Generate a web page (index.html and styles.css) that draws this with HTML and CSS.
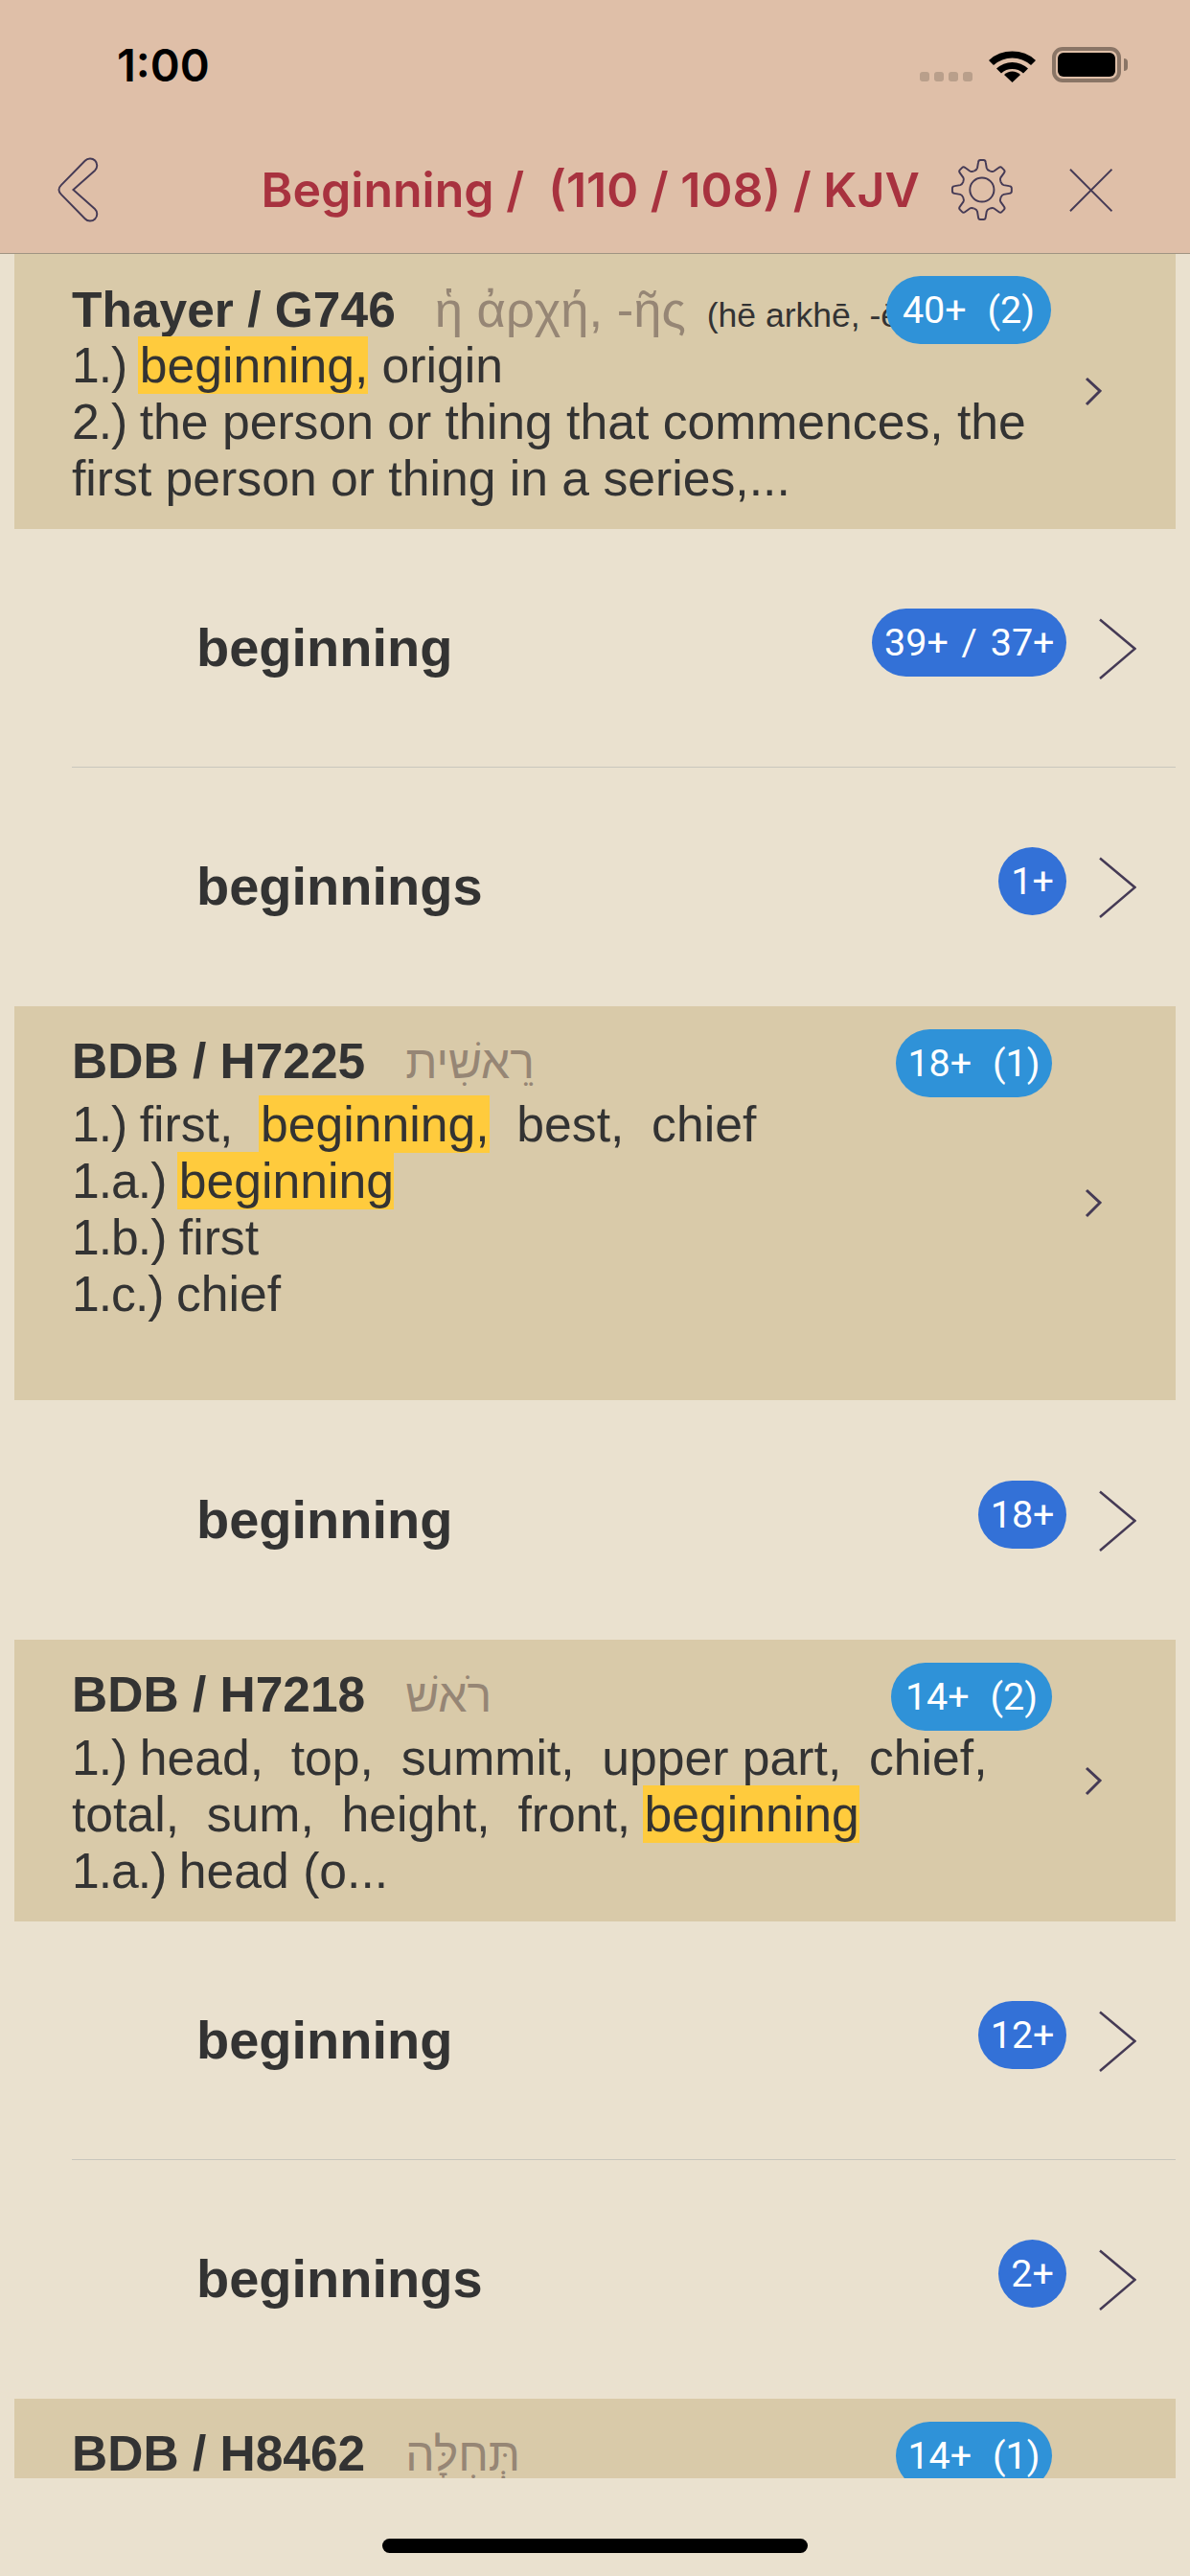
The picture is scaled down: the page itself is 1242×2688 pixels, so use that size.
FILE: index.html
```html
<html>
<head>
<meta charset="utf-8">
<link rel="stylesheet" href="styles.css">
</head>
<body>
<svg class="defs">
  <defs>
    <path id="tooth" d="M-8.4-20.3Q-5.5-21.5-5-23.5L-4-29.5Q-3.7-32-1.8-32L1.8-32Q3.7-32 4-29.5L5-23.5Q5.5-21.5 8.4-20.3"/>
    <path id="chev" d="M2 1.500L38.500 32L2 63"/>
    <path id="chev-sm" d="M2 2L16 15L2 29"/>
  </defs>
</svg>
<div class="wrapper">
  <header class="top">
    <div class="status">
      <span class="time">1:00</span>
      <div class="status__right">
        <div class="signal"><i></i><i></i><i></i><i></i></div>
        <svg class="wifi" width="49" height="36" viewBox="0 0 49 36"><path d="M0 13A36 36 0 0 1 49 13L44 18A29 29 0 0 0 5 18Z"/><path d="M8 21.500A24 24 0 0 1 41 21.500L36 26.500A17 17 0 0 0 13 26.500Z"/><path d="M24.500 36L16 28A12 12 0 0 1 33 28Z"/></svg>
        <div class="battery"><div class="battery__fill"></div></div>
        <div class="battery__nub"></div>
      </div>
    </div>
    <nav class="nav">
      <svg class="nav__back" width="44" height="72" viewBox="0 0 44 72" fill="none" stroke="#453a55" stroke-width="2"><path d="M17 36L40.300 15.300A7.500 7.500 0 1 0 29.700 4.700L4 31Q-1 36 4 41L29.700 67.300A7.500 7.500 0 1 0 40.300 56.700Z"/></svg>
      <span class="nav__title">Beginning /&nbsp; (110 / 108) / KJV</span>
      <svg class="nav__gear" width="68" height="68" viewBox="-34 -34 68 68" fill="none" stroke="#453a55" stroke-width="2">
        <use href="#tooth"/><use href="#tooth" transform="rotate(45)"/><use href="#tooth" transform="rotate(90)"/><use href="#tooth" transform="rotate(135)"/><use href="#tooth" transform="rotate(180)"/><use href="#tooth" transform="rotate(225)"/><use href="#tooth" transform="rotate(270)"/><use href="#tooth" transform="rotate(315)"/>
        <circle r="13"/>
      </svg>
      <svg class="nav__close" width="47" height="47" viewBox="0 0 47 47" fill="none" stroke="#453a55" stroke-width="2"><path d="M1 1L46 46M46 1L1 46"/></svg>
    </nav>
  </header>

  <main class="list">
    <section class="entry entry--s1">
      <div class="entry__body">
        <div class="entry__head"><b>Thayer / G746</b><span class="orig orig--gr">ἡ ἀρχή, -ῆς</span><span class="translit">(hē arkhē, -ēs)</span></div>
        <div><span class="num">1.) </span><mark>beginning,</mark> origin<br><span class="num">2.) </span>the person or thing that commences, the<br>first person or thing in a series,...</div>
      </div>
      <span class="badge badge--head">40+ (2)</span>
      <svg class="entry__chev" width="18" height="31" viewBox="0 0 18 31" fill="none" stroke="#453a55" stroke-width="3"><use href="#chev-sm"/></svg>
    </section>
    <div class="row">
      <span class="row__word">beginning</span>
      <span class="badge">39+ / 37+</span>
      <svg class="row__chev" width="40" height="65" viewBox="0 0 40 65" fill="none" stroke="#453a55" stroke-width="2.500"><use href="#chev"/></svg>
    </div>
    <div class="row row--last">
      <span class="row__word">beginnings</span>
      <span class="badge">1+</span>
      <svg class="row__chev" width="40" height="65" viewBox="0 0 40 65" fill="none" stroke="#453a55" stroke-width="2.500"><use href="#chev"/></svg>
    </div>

    <section class="entry entry--s2">
      <div class="entry__body">
        <div class="entry__head"><b>BDB / H7225</b><span class="orig">רֵאשִׁית</span></div>
        <div><span class="num">1.) </span>first,&nbsp; <mark>beginning,</mark>&nbsp; best,&nbsp; chief<br><span class="num">1.a.) </span><mark>beginning</mark><br><span class="num">1.b.) </span>first<br><span class="num">1.c.) </span>chief</div>
      </div>
      <span class="badge badge--head">18+ (1)</span>
      <svg class="entry__chev" width="18" height="31" viewBox="0 0 18 31" fill="none" stroke="#453a55" stroke-width="3"><use href="#chev-sm"/></svg>
    </section>
    <div class="row row--last row--solo">
      <span class="row__word">beginning</span>
      <span class="badge">18+</span>
      <svg class="row__chev" width="40" height="65" viewBox="0 0 40 65" fill="none" stroke="#453a55" stroke-width="2.500"><use href="#chev"/></svg>
    </div>

    <section class="entry entry--s3">
      <div class="entry__body">
        <div class="entry__head"><b>BDB / H7218</b><span class="orig">רֹאשׁ</span></div>
        <div><span class="num">1.) </span>head,&nbsp; top,&nbsp; summit,&nbsp; upper part,&nbsp; chief,<br>total,&nbsp; sum,&nbsp; height,&nbsp; front, <mark>beginning</mark><br><span class="num">1.a.) </span>head (o...</div>
      </div>
      <span class="badge badge--head">14+ (2)</span>
      <svg class="entry__chev" width="18" height="31" viewBox="0 0 18 31" fill="none" stroke="#453a55" stroke-width="3"><use href="#chev-sm"/></svg>
    </section>
    <div class="row">
      <span class="row__word">beginning</span>
      <span class="badge">12+</span>
      <svg class="row__chev" width="40" height="65" viewBox="0 0 40 65" fill="none" stroke="#453a55" stroke-width="2.500"><use href="#chev"/></svg>
    </div>
    <div class="row row--last">
      <span class="row__word">beginnings</span>
      <span class="badge">2+</span>
      <svg class="row__chev" width="40" height="65" viewBox="0 0 40 65" fill="none" stroke="#453a55" stroke-width="2.500"><use href="#chev"/></svg>
    </div>

    <section class="entry entry--s4">
      <div class="entry__body">
        <div class="entry__head"><b>BDB / H8462</b><span class="orig">תְּחִלָּה</span></div>
      </div>
      <span class="badge badge--head">14+ (1)</span>
    </section>
  </main>

  <footer class="home"><div class="home__bar"></div></footer>
</div>
</body>
</html>
```

FILE: styles.css
```css
/* reset */
* {
  padding: 0;
  margin: 0;
  box-sizing: border-box;
}

body {
  background-color: #eae1cf;
  font-family: "Liberation Sans", sans-serif;
  color: #333;
}

.defs {
  display: none;
}

.wrapper {
  width: 1242px;
  height: 2688px;
  overflow: hidden;
  display: flex;
  flex-direction: column;
}

/* status bar + nav */
.top {
  height: 265px;
  flex: none;
  background-color: #dfbfa8;
  border-bottom: 1px solid #a09482;
}

.status {
  height: 136px;
  padding: 36px 65px 0 122px;
  display: flex;
  justify-content: space-between;
  align-items: flex-start;
}

.time {
  font-family: Inter, sans-serif;
  font-weight: 600;
  font-size: 47px;
  line-height: 64px;
  color: #000;
}

.status__right {
  display: flex;
  align-items: flex-end;
  margin-top: 13px;
  height: 37px;
}

.signal {
  display: flex;
  gap: 5px;
  margin: 0 17px 1px 0;
}

.signal i {
  display: block;
  width: 10px;
  height: 10px;
  border-radius: 3px;
  background-color: #b99f8b;
}

.wifi {
  margin-right: 17px;
}

.battery {
  width: 72px;
  height: 37px;
  border: 4px solid #8a7566;
  border-radius: 11px;
  padding: 2px;
}

.battery__fill {
  height: 100%;
  background-color: #000;
  border-radius: 6px;
}

.battery__nub {
  width: 4px;
  height: 13px;
  margin: 0 0 12px 3px;
  background-color: #8a7566;
  border-radius: 0 4px 4px 0;
}

.nav {
  height: 124px;
  padding: 0 81px 0 60px;
  display: flex;
  align-items: center;
}

.nav__title {
  margin-left: 170px;
  font-family: Inter, sans-serif;
  font-weight: 600;
  font-size: 50px;
  color: #a8323f;
  white-space: nowrap;
}

.nav__gear {
  margin-left: 32px;
}

.nav__close {
  margin-left: 58px;
}

/* list */
.list {
  height: 2321px;
  flex: none;
  overflow: hidden;
}

.entry {
  position: relative;
  margin: 0 15px;
  padding-left: 60px;
  background-color: #d9caa9;
  display: flex;
  align-items: center;
  font-size: 51.7px;
  line-height: 59px;
}

.entry--s1 { height: 287px; }
.entry--s2 { height: 411px; }
.entry--s3 { height: 294px; }
.entry--s4 { height: 83px; overflow: hidden; }

.entry__body {
  align-self: flex-start;
  padding-top: 28px;
  flex: 1;
  min-width: 0;
  white-space: nowrap;
}

.entry__head {
  height: 66px;
  font-size: 51.5px;
}

.entry--s1 .entry__head {
  height: 59px;
}

.orig {
  margin-left: 42px;
  font-size: 48px;
  color: #968675;
}

.orig--gr {
  margin-left: 41px;
  font-size: 52.500px;
}

.translit {
  margin-left: 22px;
  font-size: 35.500px;
}

.entry__chev {
  margin-right: 77px;
}

.num {
  letter-spacing: -1px;
}

mark {
  background-color: #ffcb3d;
  color: inherit;
  margin-left: -2px;
  padding: 1px 0 1px 2px;
}

.badge {
  height: 71px;
  min-width: 71px;
  padding: 0 12.500px;
  border-radius: 36px;
  background-color: #3371d7;
  color: #fff;
  font-family: Roboto, sans-serif;
  font-size: 39.500px;
  line-height: 71px;
  word-spacing: 4px;
  text-align: center;
  white-space: nowrap;
}

.badge--head {
  position: absolute;
  top: 24px;
  right: 129px;
  background-color: #2f92d8;
  word-spacing: 12px;
}

.entry--s1 .badge--head {
  top: 23px;
  right: 130px;
  padding: 0 17px;
}

.entry--s3 .badge--head {
  padding: 0 15px;
}

.row {
  height: 249px;
  margin-left: 75px;
  margin-right: 15px;
  padding: 0 41px 0 130px;
  border-bottom: 1px solid #c9c6bd;
  display: flex;
  align-items: center;
}

.row--last {
  border-bottom: 0;
}

.row--solo {
  height: 250px;
}

.row__word {
  flex: 1;
  font-size: 56px;
  font-weight: bold;
  padding-bottom: 2px;
}

.row .badge {
  margin-bottom: 12px;
}

.row__chev {
  margin-left: 33px;
  margin-bottom: -2px;
}

/* home indicator */
.home {
  flex: 1;
  display: flex;
  justify-content: center;
  padding-top: 63px;
}

.home__bar {
  width: 444px;
  height: 15px;
  border-radius: 8px;
  background-color: #000;
}
```
